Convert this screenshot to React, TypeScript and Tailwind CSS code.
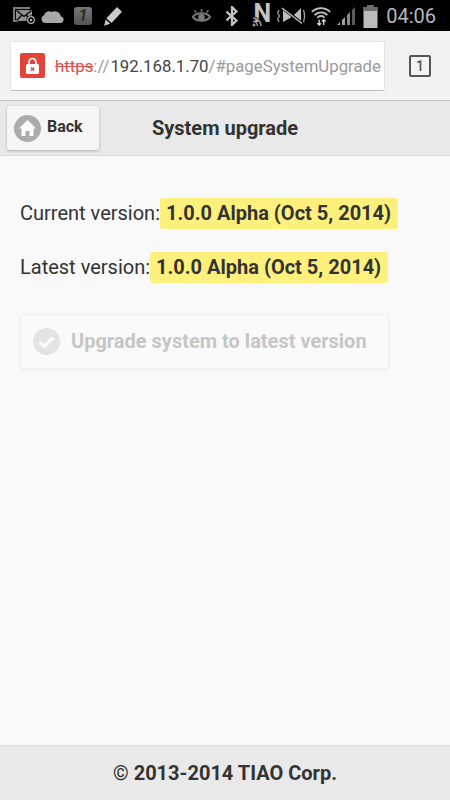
import React from 'react'

const font = { fontFamily: 'Roboto, "Noto Sans", sans-serif' }

// Status bar glyphs, drawn by hand to follow the phone's notification icons
const StatusLeft = () => (
  <div className="flex items-center">
    <svg width="23" height="18" viewBox="0 0 23 18" className="ml-[13px]">
      <path d="M0 0h17v2H2v11h3v2H0z" fill="#7c7c7c" />
      <rect x="3" y="3" width="16" height="11" fill="#8e8e8e" />
      <path d="M3.500 3.500l7.500 6 7.500-6M3.500 13.500l5.500-5.500M18.500 13.500L13 8" fill="none" stroke="#000" strokeWidth="1.200" />
      <circle cx="18" cy="13" r="4.600" fill="#000" />
      <circle cx="18" cy="13" r="3.300" fill="none" stroke="#b0b0b0" strokeWidth="1.200" />
      <circle cx="18" cy="13" r="1.200" fill="#b0b0b0" />
    </svg>
    <svg width="24" height="16" viewBox="0 0 24 16" className="ml-[5px]">
      <path d="M4.500 15A4 4 0 0 1 3 7.300 5 5 0 0 1 10.500 4 6.500 6.500 0 0 1 20 8.200 3.500 3.500 0 0 1 20 15z" fill="#a8a8a8" />
    </svg>
    <div className="ml-[9px] flex h-[18px] w-[18px] items-center justify-center rounded-[3px] bg-gradient-to-b from-[#777] to-[#555] text-[16px] font-bold italic leading-none text-[#2c2c2c]">
      1
    </div>
    <svg width="20" height="20" viewBox="0 0 20 20" className="ml-[11px]">
      <path d="M14 1l5 4.800L8.500 17 3.400 12.200z" fill="#cacaca" />
      <path d="M2.800 13.500l4.400 4.200-6.200 2z" fill="#cacaca" />
    </svg>
  </div>
)

const StatusRight = () => (
  <div className="flex items-center">
    <svg width="19" height="16" viewBox="0 0 22 18">
      <path d="M1 10c4-5.500 16-5.500 20 0-4 6-16 6-20 0z" fill="none" stroke="#7a7a7a" strokeWidth="2.200" />
      <circle cx="11" cy="10.500" r="3.800" fill="#7a7a7a" />
      <path d="M5 5L3 2.500M11 4V1M17 5l2-2.500" stroke="#7a7a7a" strokeWidth="1.800" />
    </svg>
    <svg width="14" height="20" viewBox="0 0 12 18" className="ml-[14px]">
      <path d="M1 5l9 8-4 4V1l4 4-9 8" fill="none" stroke="#c4c4c4" strokeWidth="2" />
    </svg>
    <div className="relative ml-[13px] h-[22px] w-[19px]">
      <span className="absolute right-0 top-[-3px] text-[25px] font-bold leading-[24px] text-[#c4c4c4]">N</span>
      <svg width="12" height="12" viewBox="0 0 12 12" className="absolute bottom-0 left-0">
        <path d="M0 1.500a10 10 0 0 1 10.500 10.500H8.500A8 8 0 0 0 0 3.500z" fill="#000" />
        <path d="M1 3a8 8 0 0 1 8 8M1 6.500a4.500 4.500 0 0 1 4.500 4.500" fill="none" stroke="#9a9a9a" strokeWidth="1.500" />
        <circle cx="2" cy="10" r="1.500" fill="#9a9a9a" />
      </svg>
    </div>
    <svg width="29" height="20" viewBox="0 0 29 20" className="ml-[6px]">
      <path d="M6 3v13l8-4.500V7.500zM16 10l8-8v16z" fill="#bcbcbc" />
      <path d="M5 1.500l20 16" stroke="#000" strokeWidth="3" />
      <path d="M5 2l20 15.500" stroke="#bcbcbc" strokeWidth="1.500" />
      <path d="M2 4l-1.500 3 2 3-2 3 1.500 3M26.500 4q2 6 0 12" fill="none" stroke="#a8a8a8" strokeWidth="1.200" />
    </svg>
    <svg width="20" height="22" viewBox="0 0 22 22" className="ml-[5px]">
      <path d="M1 6.500a14 14 0 0 1 20 0M4 10a9.500 9.500 0 0 1 14 0M7 13a5 5 0 0 1 8 0" fill="none" stroke="#c2c2c2" strokeWidth="2" />
      <path d="M9 15v6M7 19l2 2 2-2M14 21v-6M12 17l2-2 2 2" fill="none" stroke="#dadada" strokeWidth="1.500" />
    </svg>
    <svg width="20" height="20" viewBox="0 0 20 20" className="ml-[5px]">
      <path d="M1 19l3-3v3z" fill="#a0a0a0" />
      <path d="M6 19v-5l3-3v8z" fill="#a0a0a0" />
      <path d="M11 19V9l3-3v13z" fill="#888" />
      <path d="M16 19V4l3-3v18z" fill="#5a5a5a" />
    </svg>
    <svg width="17" height="24" viewBox="0 0 16 24" className="ml-[6px]">
      <path d="M5 1h6v2h4v21H1V3h4z" fill="#bcbcbc" />
      <path d="M5 1h6v2h4v4H1V3h4z" fill="#6d6d6d" />
    </svg>
    <span className="ml-[7px] mr-[14px] text-[20px] leading-none text-[#b8b8b8]">04:06</span>
  </div>
)

const VersionRow = ({ label }: { label: string }) => (
  <div className="flex items-center text-[20px] leading-[31px] text-[#333]">
    <span>{label}</span>
    <span className="rounded-[3px] bg-[#fdf07c] pl-[6px] pr-[7px] font-bold">1.0.0 Alpha (Oct 5, 2014)</span>
  </div>
)

export default function App() {
  return (
    <div className="flex h-[800px] w-[450px] flex-col overflow-hidden bg-[#f9f9f9]" style={font}>
      {/* Status bar */}
      <div className="flex h-[31px] shrink-0 items-center justify-between bg-black">
        <StatusLeft />
        <StatusRight />
      </div>

      {/* Browser address bar */}
      <div className="flex h-[70px] shrink-0 items-center border-b border-[#c4c4c4] bg-[#f2f2f2] pl-[10px]">
        <div className="flex h-[50px] w-[375px] items-center rounded-[2px] border border-[#e4e4e4] border-b-[#bdbdbd] bg-white pl-[9px]">
          <div className="flex h-[25px] w-[25px] items-center justify-center rounded-[2px] bg-[#e0443a]">
            <svg width="15" height="18" viewBox="0 0 15 18">
              <path d="M4 8V5a3.500 3.500 0 0 1 7 0v3" fill="none" stroke="#fff" strokeWidth="1.700" />
              <rect x="1" y="7" width="13" height="10" rx="1.500" fill="#fff" />
              <path d="M5.800 10.500l3.400 3.400M9.200 10.500l-3.400 3.400" stroke="#e0443a" strokeWidth="1.300" />
            </svg>
          </div>
          <div className="ml-[10px] mt-[1px] whitespace-nowrap text-[16.8px] leading-none">
            <span className="text-[#d9544c] line-through">https</span>
            <span className="mr-[1px] text-[#9a9a9a]">://</span>
            <span className="text-[#444]">192.168.1.70</span>
            <span className="text-[#9a9a9a]">/#pageSystemUpgrade</span>
          </div>
        </div>
        <div className="ml-[24px] flex h-[22px] w-[22px] items-center justify-center rounded-[2px] border-2 border-[#555] text-[14px] font-medium leading-none text-[#555]">
          1
        </div>
      </div>

      {/* Page header */}
      <div className="relative flex h-[55px] shrink-0 items-center justify-center border-b border-[#dcdcdc] bg-[#e9e9e9]">
        <span className="text-[20px] font-bold text-[#333]">System upgrade</span>
        <button className="absolute left-[7px] top-[5px] flex h-[44px] w-[92px] items-center rounded-[3px] bg-[#f6f6f6] pl-[7px] shadow-[0_1px_3px_rgba(0,0,0,0.25)]">
          <span className="flex h-[27px] w-[27px] items-center justify-center rounded-full bg-[#acacac]">
            <svg width="19" height="18" viewBox="0 0 19 18">
              <path d="M9.500 1L1 9.500h2.500V17h4v-5h4v5h4V9.500H18z" fill="#fff" />
            </svg>
          </span>
          <span className="ml-[6px] mt-[-3px] text-[16px] font-bold text-[#333]">Back</span>
        </button>
      </div>

      {/* Content */}
      <main className="flex flex-1 flex-col items-start px-[20px] pt-[42px]">
        <div className="flex flex-col gap-[23px]">
          <VersionRow label="Current version:" />
          <VersionRow label="Latest version:" />
        </div>
        <button className="mt-[31px] flex h-[55px] w-[369px] items-center rounded-[4px] border border-[#f1f1f1] bg-[#fafafa] pl-[12px] shadow-[0_1px_2px_rgba(0,0,0,0.05)]">
          <span className="flex h-[27px] w-[27px] items-center justify-center rounded-full bg-[#e3e3e3]">
            <svg width="17" height="14" viewBox="0 0 17 14">
              <path d="M2 7.500l4.500 4L15 2.500" fill="none" stroke="#fbfbfb" strokeWidth="3.500" />
            </svg>
          </span>
          <span className="ml-[11px] mt-[-1px] text-[20px] font-bold text-[#c6c6c6]">Upgrade system to latest version</span>
        </button>
      </main>

      {/* Footer */}
      <footer className="flex h-[55px] shrink-0 items-center justify-center border-t border-[#dcdcdc] bg-[#e9e9e9] text-[20px] font-bold text-[#333]">
        © 2013-2014 TIAO Corp.
      </footer>
    </div>
  )
}
